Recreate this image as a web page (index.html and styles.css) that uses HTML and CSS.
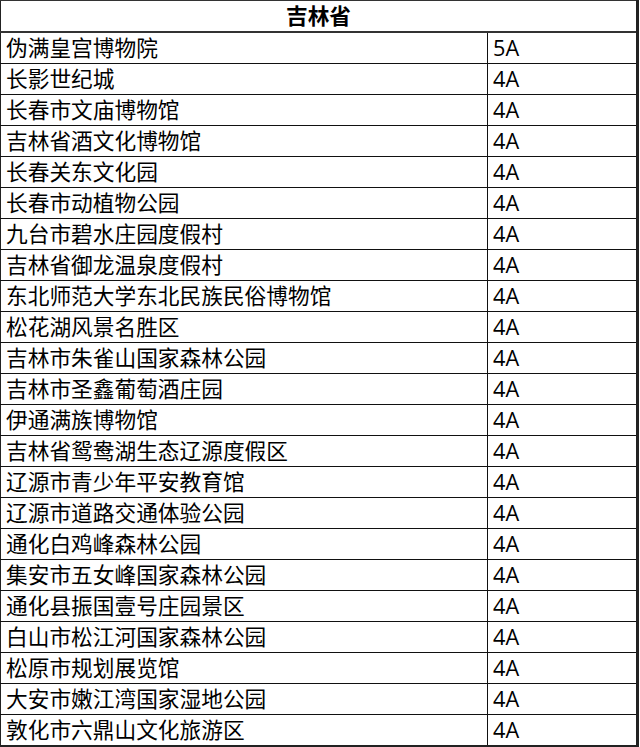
FILE: index.html
```html
<!DOCTYPE html>
<html lang="zh-CN">
<head>
<meta charset="utf-8">
<title>吉林省</title>
<link rel="stylesheet" href="styles.css">
</head>
<body>
<table class="sheet">
  <colgroup>
    <col class="col-name">
    <col class="col-grade">
  </colgroup>
  <thead>
    <tr><th colspan="2" class="title">吉林省</th></tr>
  </thead>
  <tbody>
    <tr><td class="name">伪满皇宫博物院</td><td class="grade">5A</td></tr>
    <tr><td class="name">长影世纪城</td><td class="grade">4A</td></tr>
    <tr><td class="name">长春市文庙博物馆</td><td class="grade">4A</td></tr>
    <tr><td class="name">吉林省酒文化博物馆</td><td class="grade">4A</td></tr>
    <tr><td class="name">长春关东文化园</td><td class="grade">4A</td></tr>
    <tr><td class="name">长春市动植物公园</td><td class="grade">4A</td></tr>
    <tr><td class="name">九台市碧水庄园度假村</td><td class="grade">4A</td></tr>
    <tr><td class="name">吉林省御龙温泉度假村</td><td class="grade">4A</td></tr>
    <tr><td class="name">东北师范大学东北民族民俗博物馆</td><td class="grade">4A</td></tr>
    <tr><td class="name">松花湖风景名胜区</td><td class="grade">4A</td></tr>
    <tr><td class="name">吉林市朱雀山国家森林公园</td><td class="grade">4A</td></tr>
    <tr><td class="name">吉林市圣鑫葡萄酒庄园</td><td class="grade">4A</td></tr>
    <tr><td class="name">伊通满族博物馆</td><td class="grade">4A</td></tr>
    <tr><td class="name">吉林省鸳鸯湖生态辽源度假区</td><td class="grade">4A</td></tr>
    <tr><td class="name">辽源市青少年平安教育馆</td><td class="grade">4A</td></tr>
    <tr><td class="name">辽源市道路交通体验公园</td><td class="grade">4A</td></tr>
    <tr><td class="name">通化白鸡峰森林公园</td><td class="grade">4A</td></tr>
    <tr><td class="name">集安市五女峰国家森林公园</td><td class="grade">4A</td></tr>
    <tr><td class="name">通化县振国壹号庄园景区</td><td class="grade">4A</td></tr>
    <tr><td class="name">白山市松江河国家森林公园</td><td class="grade">4A</td></tr>
    <tr><td class="name">松原市规划展览馆</td><td class="grade">4A</td></tr>
    <tr><td class="name">大安市嫩江湾国家湿地公园</td><td class="grade">4A</td></tr>
    <tr><td class="name">敦化市六鼎山文化旅游区</td><td class="grade">4A</td></tr>
  </tbody>
</table>
</body>
</html>
```
FILE: styles.css
```css
html, body {
  margin: 0;
  padding: 0;
  background: #fff;
}

.sheet {
  border-collapse: collapse;
  width: 639px;
  table-layout: fixed;
  font-family: "Open Sans", "Noto Sans CJK SC", sans-serif;
  font-size: 21.7px;
  color: #000;
  border-left: 1px solid #222;
  border-top: 1px solid #333;
  border-right: 3px solid #222;
  border-bottom: 2px solid #222;
}

.col-name {
  width: 487px;
}

.title {
  height: 30px;
  padding: 0;
  font-weight: bold;
  text-align: center;
  line-height: 30px;
  border-bottom: 2px solid #333;
}

.sheet td {
  height: 30px;
  padding: 0 0 0 5px;
  line-height: 30px;
  border-bottom: 1px solid #111;
  white-space: nowrap;
  overflow: hidden;
  vertical-align: middle;
}

.sheet tbody tr:last-child td {
  border-bottom: none;
}

.name {
  border-right: 1px solid #111;
}

.grade {
  padding-left: 4px;
}
```
